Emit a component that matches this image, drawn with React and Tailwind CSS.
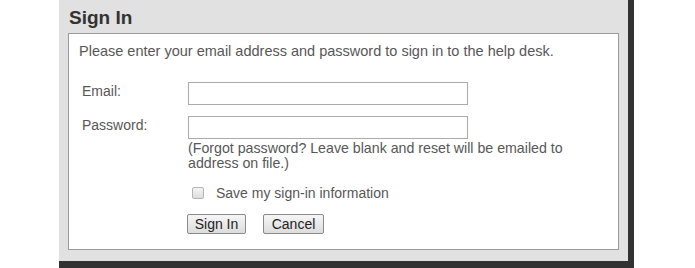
import React from "react";

export default function App() {
  const font = { fontFamily: '"Liberation Sans", Arial, sans-serif' };
  return (
    <div className="w-[695px] h-[268px] bg-white overflow-hidden" style={font}>
      <div className="ml-[59px] w-[575px] h-[268px] bg-[#e1e1e1] border-r-[6px] border-b-[7px] border-[#323232] px-[9px] flex flex-col">
        <h1 className="h-[33px] pt-[2px] pl-[1px] leading-[31px] text-[19px] font-bold text-[#333]">
          Sign In
        </h1>
        <div className="h-[217px] bg-white border border-[#9a9a9a] pl-[10px] pt-[9px] text-[14px] text-[#575757]">
          <p className="leading-[16px] text-[14.5px]">
            Please enter your email address and password to sign in to the help desk.
          </p>
          <div className="mt-[23px] flex flex-col gap-[11px]">
            <div className="flex items-start">
              <label className="w-[109px] pl-[3px] pt-[1px] leading-[16px]">Email:</label>
              <input
                type="text"
                className="w-[280px] h-[23px] border border-[#ababab] bg-white outline-none"
              />
            </div>
            <div className="flex items-start">
              <label className="w-[109px] pl-[3px] pt-[1px] leading-[16px]">Password:</label>
              <div className="flex flex-col">
                <input
                  type="password"
                  className="w-[280px] h-[23px] border border-[#ababab] bg-white outline-none"
                />
                <p className="mt-[2px] w-[400px] leading-[15px] text-[14.2px]">
                  (Forgot password? Leave blank and reset will be emailed to address on file.)
                </p>
                <div className="mt-[14px] flex items-center">
                  <span className="ml-[4px] w-[12px] h-[12px] rounded-[2px] border border-[#b5b5b5] bg-gradient-to-b from-[#f4f4f4] to-[#dedede]" />
                  <span className="ml-[12px] leading-[16px]">Save my sign-in information</span>
                </div>
                <div className="mt-[13px] -ml-[1px] flex gap-[17px]">
                  <button className="w-[59px] h-[20px] rounded-[2px] border border-[#8a8a8a] bg-gradient-to-b from-[#f6f6f6] to-[#dcdcdc] text-[14px] text-[#222] leading-[16px]">
                    Sign In
                  </button>
                  <button className="w-[61px] h-[20px] rounded-[2px] border border-[#8a8a8a] bg-gradient-to-b from-[#f6f6f6] to-[#dcdcdc] text-[14px] text-[#222] leading-[16px]">
                    Cancel
                  </button>
                </div>
              </div>
            </div>
          </div>
        </div>
      </div>
    </div>
  );
}
